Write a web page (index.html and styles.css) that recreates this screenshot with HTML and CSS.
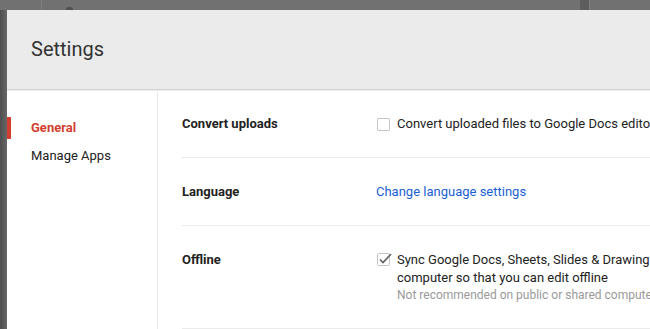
FILE: index.html
```html
<!DOCTYPE html>
<html lang="en">

<head>
    <meta charset="UTF-8">
    <meta name="viewport" content="width=device-width, initial-scale=1.0">
    <title>Settings</title>
    <link rel="stylesheet" href="styles.css">
</head>

<body>
    <div class="topbar">
        <span class="tb-gap1"></span>
        <span class="tb-line"></span>
        <span class="tb-gap2"></span>
        <span class="tb-dot"></span>
        <span class="tb-gap3"></span>
        <span class="tb-block"></span>
        <span class="tb-line"></span>
    </div>

    <div class="stage">
        <div class="edge"></div>

        <div class="dialog">
            <header class="dialog-head">
                <h1>Settings</h1>
            </header>

            <div class="dialog-body">
                <nav class="nav">
                    <a class="nav-item active">General</a>
                    <a class="nav-item">Manage Apps</a>
                </nav>

                <main class="content">
                    <div class="row">
                        <div class="label">Convert uploads</div>
                        <div class="control">
                            <span class="check"></span>
                            <div class="text">Convert uploaded files to Google Docs editor format</div>
                        </div>
                    </div>

                    <div class="row">
                        <div class="label">Language</div>
                        <div class="control">
                            <a class="link">Change language settings</a>
                        </div>
                    </div>

                    <div class="row">
                        <div class="label">Offline</div>
                        <div class="control">
                            <span class="check checked">
                                <svg width="17" height="15" viewBox="0 0 17 15">
                                    <rect x="0.5" y="2.5" width="12" height="12" rx="1" fill="#fff" stroke="#c4c4c4"/>
                                    <path d="M3 8.5 L6 11.5 L14 3" fill="none" stroke="#5f5f5f" stroke-width="1.6"/>
                                </svg>
                            </span>
                            <div class="text">
                                Sync Google Docs, Sheets, Slides &amp; Drawings files to this<br>
                                computer so that you can edit offline
                                <div class="note">Not recommended on public or shared computers</div>
                            </div>
                        </div>
                    </div>
                </main>
            </div>
        </div>
    </div>
</body>

</html>
```

FILE: styles.css
```css
html,
body {
    margin: 0;
    height: 100%;
    overflow: hidden;
    font-family: Roboto, 'Liberation Sans', Arial, sans-serif;
    font-size: 13px;
    color: #222;
    background-color: #737373;
}

.topbar {
    display: flex;
    height: 10px;
    background-color: #717171;
}

.tb-gap1 {
    width: 41px;
}

.tb-line {
    width: 1px;
    background-color: #7e7e7e;
}

.tb-gap2 {
    width: 24px;
}

.tb-dot {
    width: 7px;
    height: 3px;
    margin-top: 7px;
    border-radius: 3px 3px 0 0;
    background-color: #4f4f4f;
}

.tb-gap3 {
    width: 507px;
}

.tb-block {
    width: 9px;
    background-color: #5d5d5d;
}

.stage {
    display: flex;
    height: calc(100% - 10px);
}

.edge {
    width: 7px;
    flex: none;
    background: linear-gradient(to right, #4e4e4e, #676767);
}

.dialog {
    width: 760px;
    flex: none;
    background-color: white;
}

.dialog-head {
    height: 79px;
    display: flex;
    align-items: center;
    padding-left: 24px;
    background-color: #ebebeb;
    border-bottom: 1px solid #d2d2d2;
    box-shadow: 0 1px 0 #ececec;
}

.dialog-head h1 {
    margin: 0 0 1px;
    font-size: 20px;
    font-weight: 400;
    color: #333;
}

.dialog-body {
    display: flex;
    height: 100%;
}

.nav {
    width: 150px;
    flex: none;
    padding-top: 27px;
    border-right: 1px solid #ebebeb;
}

.nav-item {
    display: block;
    height: 22px;
    line-height: 22px;
    margin-bottom: 6px;
    padding-left: 20px;
    border-left: 4px solid transparent;
    color: #222;
}

.nav-item.active {
    border-left-color: #d23f31;
    color: #d23f31;
    font-weight: bold;
}

.content {
    flex: 1;
    padding-left: 24px;
}

.row {
    display: flex;
    padding: 25px 0 24px;
    line-height: 18px;
    border-bottom: 1px solid #ebebeb;
}

.label {
    width: 194px;
    flex: none;
    font-weight: bold;
}

.control {
    display: flex;
    align-items: flex-start;
    white-space: nowrap;
}

.check {
    width: 11px;
    height: 11px;
    margin: 3px 7px 0 1px;
    border: 1px solid #c6c6c6;
    border-radius: 1px;
    flex: none;
}

.check.checked {
    width: 17px;
    height: 15px;
    margin: 0 3px 0 1px;
    border: none;
}

.check svg {
    display: block;
}

.link {
    color: #1a5fd4;
    cursor: pointer;
}

.note {
    font-size: 12px;
    line-height: 17px;
    color: #9a9a9a;
}
```
